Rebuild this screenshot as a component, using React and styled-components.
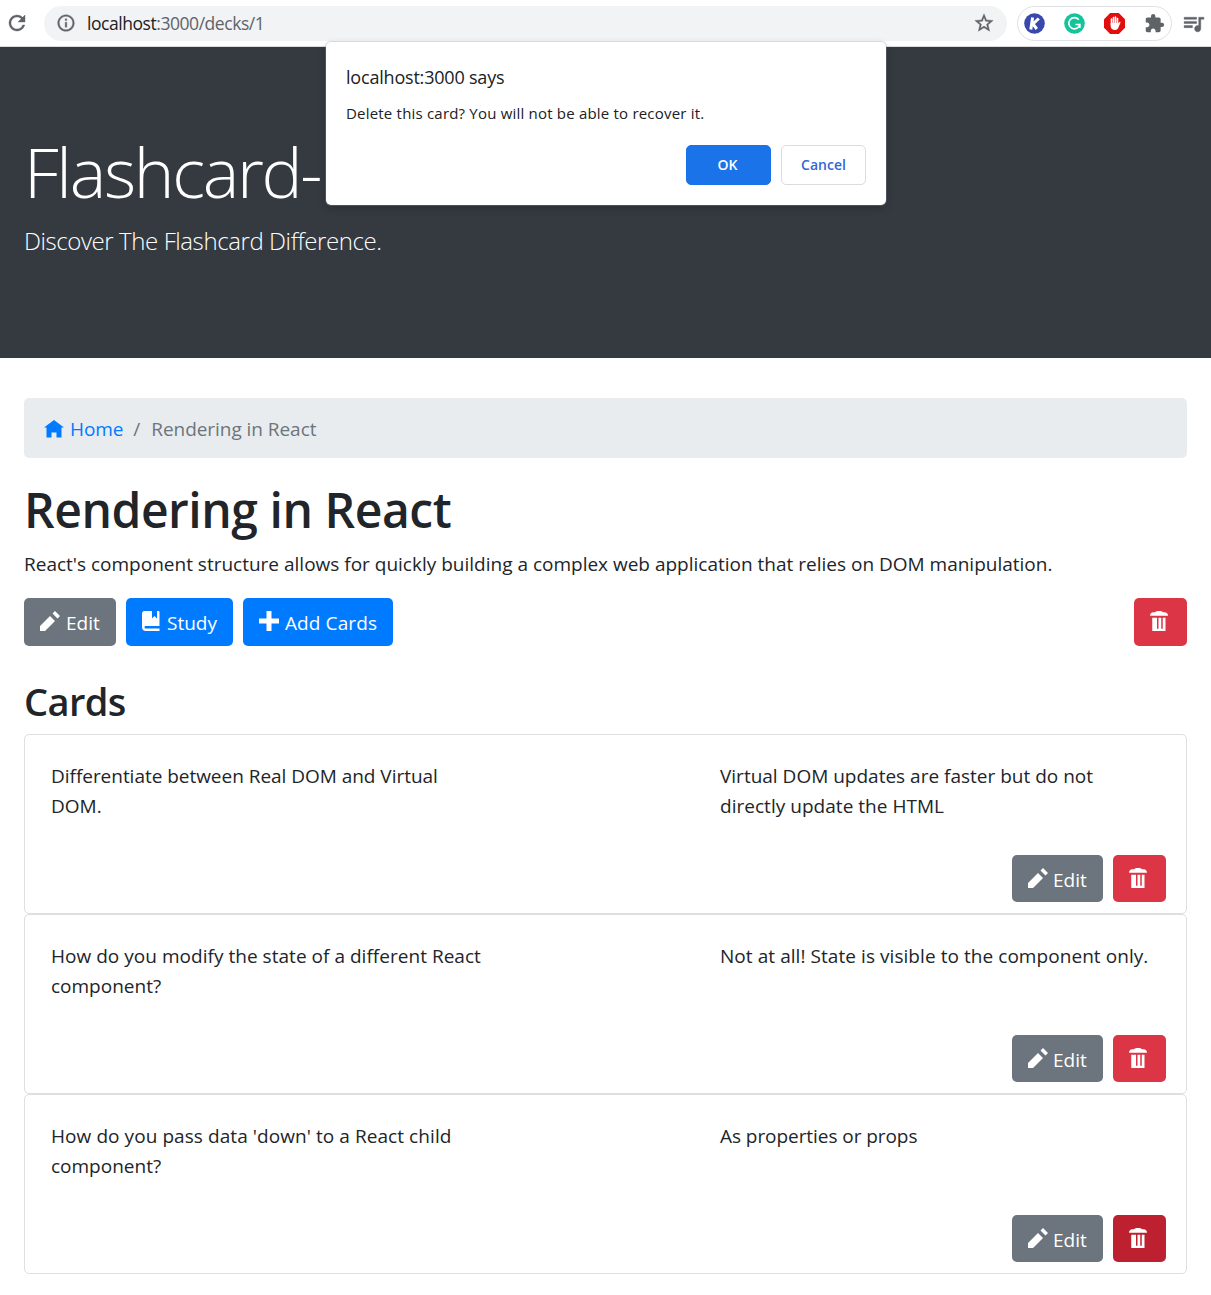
import React from "react";
import styled, { createGlobalStyle } from "styled-components";
import { MdRefresh, MdStarBorder, MdInfoOutline, MdExtension, MdQueueMusic } from "react-icons/md";

const GlobalStyle = createGlobalStyle`
  *, *::before, *::after { box-sizing: border-box; }
  body {
    margin: 0;
    background: #fff;
    color: #212529;
    font-family: "Open Sans", "Noto Sans", sans-serif;
    font-size: 19px;
    line-height: 30px;
  }
  h1, h2, p { margin: 0; }
  button { font-family: inherit; }
  svg { display: block; flex: none; }
`;

const Text = styled.span`
  letter-spacing: ${(p) => p.$track || 0}px;
  white-space: nowrap;
`;

const Toolbar = styled.header`
  display: flex;
  align-items: center;
  height: 47px;
  padding: 0 5px;
  background: #fff;
  border-bottom: 1px solid #d9dbdd;
  color: #5f6368;
`;

const ToolIcon = styled.span`
  display: flex;
  path { stroke-width: 0.4px; }
  path[fill="none"] { stroke: none; }
`;

const AddressBar = styled.div`
  display: flex;
  align-items: center;
  flex: 1;
  height: 35px;
  margin: 0 10px 0 15px;
  padding: 0 12px;
  border-radius: 18px;
  background: #f1f3f4;
`;

const Url = styled.div`
  flex: 1;
  margin-left: 11px;
  font-size: 17.5px;
  b { font-weight: 400; color: #202124; }
`;

const Extensions = styled.div`
  display: flex;
  align-items: center;
  gap: 19px;
  width: 155px;
  height: 35px;
  margin-right: 9px;
  padding: 0 6px;
  border: 1px solid #dfe1e5;
  border-radius: 18px;
`;

const Banner = styled.section`
  height: 311px;
  padding: 79px 24px 0;
  background: #343a40;
  color: #fff;
  font-weight: 300;
`;

const BannerTitle = styled.h1`
  font-size: 69px;
  font-weight: 300;
  line-height: 90px;
`;

const Tagline = styled.p`
  margin-top: 6px;
  font-size: 24px;
  line-height: 38px;
`;

const Main = styled.main`
  padding: 40px 24px 0;
`;

const Breadcrumb = styled.nav`
  display: flex;
  align-items: center;
  height: 60px;
  padding: 2px 20px 0;
  border-radius: 5px;
  background: #e9ecef;
  color: #6c757d;
`;

const HomeLink = styled.a`
  display: flex;
  align-items: center;
  gap: 6px;
  color: #007bff;
  svg { margin-top: 1px; }
`;

const Slash = styled.span`
  padding: 0 11px 0 10px;
`;

const DeckTitle = styled.h1`
  margin-top: 21px;
  font-size: 48px;
  font-weight: 600;
  line-height: 62px;
`;

const Description = styled.p`
  margin-top: 8px;
`;

const Actions = styled.div`
  display: flex;
  gap: 10px;
  margin-top: 19px;
`;

const fills = { gray: "#6c757d", blue: "#007bff", red: "#dc3545", darkRed: "#bd2130" };

const Button = styled.button`
  display: flex;
  align-items: center;
  gap: ${(p) => p.$gap || 6}px;
  width: ${(p) => p.$width}px;
  height: ${(p) => p.$height || 48}px;
  margin-left: ${(p) => (p.$end ? "auto" : 0)};
  padding: 0 0 0 16px;
  border: 0;
  border-radius: 5px;
  background: ${(p) => fills[p.$fill]};
  color: #fff;
  font-size: 19px;
  svg { margin-bottom: 2px; }
  span { padding-top: 2px; }
`;

const CardsTitle = styled.h2`
  margin-top: 31px;
  font-size: 38px;
  font-weight: 600;
  line-height: 48px;
`;

const CardList = styled.div`
  margin-top: 9px;
`;

const Card = styled.article`
  display: flex;
  flex-direction: column;
  justify-content: space-between;
  height: 180px;
  padding: 26px 20px 11px 26px;
  border: 1px solid #dfdfdf;
  border-radius: 5px;
`;

const Sides = styled.div`
  display: grid;
  grid-template-columns: 669px 1fr;
`;

const CardActions = styled.div`
  display: flex;
  justify-content: flex-end;
  gap: 10px;
`;

const Dialog = styled.div`
  position: absolute;
  top: 42px;
  left: 326px;
  width: 560px;
  height: 163px;
  padding: 20px;
  border-radius: 5px;
  background: #fff;
  box-shadow: 0 0 0 1px rgba(150, 155, 160, 0.3), 0 3px 8px rgba(0, 0, 0, 0.2);
  color: #202124;
`;

const DialogTitle = styled.div`
  font-size: 18px;
  line-height: 30px;
`;

const DialogMessage = styled.div`
  margin-top: 9px;
  font-size: 15px;
  line-height: 24px;
`;

const DialogActions = styled.div`
  display: flex;
  justify-content: flex-end;
  gap: 10px;
  margin-top: 20px;
`;

const DialogButton = styled.button`
  width: 85px;
  height: 40px;
  padding: 0 ${(p) => (p.$primary ? 2 : 0)}px 2px 0;
  border: 1px solid ${(p) => (p.$primary ? "#1a73e8" : "#dadce0")};
  border-radius: 5px;
  background: ${(p) => (p.$primary ? "#1a73e8" : "#fff")};
  color: ${(p) => (p.$primary ? "#fff" : "#3367d6")};
  font-size: 14px;
  font-weight: 600;
`;

const shapes = {
  home: "M4 0l-4 3h1v4h2v-2h2v2h2v-4.03l1 .03-4-3z",
  pencil: "M6 0l-1 1 2 2 1-1-2-2zm-2 2l-4 4v2h2l4-4-2-2z",
  plus: "M3 0v3h-3v2h3v3h2v-3h3v-2h-3v-3h-2z",
  book: "M1 0c-.07 0-.13.01-.19.03-.39.08-.7.39-.78.78-.03.06-.03.12-.03.19v5.5c0 .83.67 1.5 1.5 1.5h5.5v-1h-5.5c-.28 0-.5-.22-.5-.5s.22-.5.5-.5h5.5v-5.5c0-.28-.22-.5-.5-.5h-.5v3l-1-1-1 1v-3h-3z",
  trash: "M3 0c-.5 0-.7.3-1 .5h-.7c-.7 0-1.3.6-1.3 1.4h7.2c0-.8-.6-1.4-1.3-1.4h-.7c-.3-.2-.5-.5-1-.5h-1.2zm-2.1 2.7v5.300h5.300v-5.300h-1.100v4.400h-.6v-4.400h-1.100v4.400h-.6v-4.400h-1.900z",
};

const Icon = ({ name }) => (
  <svg width="20" height="20" viewBox="0 0 8 8" fill="currentColor">
    <path d={shapes[name]} />
  </svg>
);

const cards = [
  {
    front: [["Differentiate between Real DOM and Virtual", -0.03], ["DOM."]],
    back: [["Virtual DOM updates are faster but do not"], ["directly update the HTML", 0.03]],
  },
  {
    front: [["How do you modify the state of a different React", 0.03], ["component?"]],
    back: [["Not at all! State is visible to the component only.", 0.06]],
  },
  {
    front: [["How do you pass data 'down' to a React child", 0.07], ["component?"]],
    back: [["As properties or props", -0.06]],
    active: true,
  },
];

const Lines = ({ lines }) => (
  <div>
    {lines.map(([line, track]) => (
      <div key={line}><Text $track={track}>{line}</Text></div>
    ))}
  </div>
);

export default function App() {
  return (
    <>
      <GlobalStyle />
      <Toolbar>
        <ToolIcon><MdRefresh size={24} /></ToolIcon>
        <AddressBar>
          <ToolIcon><MdInfoOutline size={20} /></ToolIcon>
          <Url><Text $track={-0.45}><b>localhost</b>:3000/decks/1</Text></Url>
          <ToolIcon><MdStarBorder size={22} /></ToolIcon>
        </AddressBar>
        <Extensions>
          <svg width="21" height="21" viewBox="0 0 21 21">
            <circle cx="10.5" cy="10.5" r="10.3" fill="#3949ab" />
            <path d="M8.6 4.5 6.8 16.5M14.8 5.5 9 11l3.8 5" fill="none" stroke="#fff" strokeWidth="3" />
          </svg>
          <svg width="21" height="21" viewBox="0 0 21 21">
            <circle cx="10.5" cy="10.5" r="10.3" fill="#15c39a" />
            <path d="M14.8 6.7A5.6 5.6 0 1 0 15.9 11.5H11.5M15.9 11.5V15" fill="none" stroke="#fff" strokeWidth="1.6" />
          </svg>
          <svg width="21" height="21" viewBox="0 0 21 21">
            <path d="M6.2 0h8.6L21 6.2v8.6L14.8 21H6.2L0 14.8V6.2z" fill="#e40d0d" />
            <path d="M7.5 6v6M9.5 4.5V11M11.5 4V11M13.5 5.5V12" stroke="#fff" strokeWidth="1.6" strokeLinecap="round" />
            <path d="M6.7 10h7.6l1.4-1.2q1.2-.2.7.9L14 15.5Q12.6 17.2 10 17T6.7 14z" fill="#fff" />
          </svg>
          <MdExtension size={21} />
        </Extensions>
        <ToolIcon><MdQueueMusic size={25} /></ToolIcon>
      </Toolbar>
      <Banner>
        <BannerTitle><Text $track={-2.3}>Flashcard-</Text></BannerTitle>
        <Tagline><Text $track={-0.41}>Discover The Flashcard Difference.</Text></Tagline>
      </Banner>
      <Main>
        <Breadcrumb>
          <HomeLink><Icon name="home" /><Text $track={-0.1}>Home</Text></HomeLink>
          <Slash>/</Slash>
          <Text $track={-0.05}>Rendering in React</Text>
        </Breadcrumb>
        <DeckTitle><Text $track={-0.45}>Rendering in React</Text></DeckTitle>
        <Description>
          <Text>React's component structure allows for quickly building a complex web application that relies on DOM manipulation.</Text>
        </Description>
        <Actions>
          <Button $fill="gray" $width={92}><Icon name="pencil" /><Text>Edit</Text></Button>
          <Button $fill="blue" $width={107} $gap={5}><Icon name="book" /><Text>Study</Text></Button>
          <Button $fill="blue" $width={150}><Icon name="plus" /><Text $track={0.1}>Add Cards</Text></Button>
          <Button $fill="red" $width={53} $end><Icon name="trash" /></Button>
        </Actions>
        <CardsTitle><Text $track={-0.6}>Cards</Text></CardsTitle>
        <CardList>
          {cards.map((card) => (
            <Card key={card.front[0][0]}>
              <Sides><Lines lines={card.front} /><Lines lines={card.back} /></Sides>
              <CardActions>
                <Button $fill="gray" $width={91} $height={47} $gap={5}><Icon name="pencil" /><Text>Edit</Text></Button>
                <Button $fill={card.active ? "darkRed" : "red"} $width={53} $height={47}><Icon name="trash" /></Button>
              </CardActions>
            </Card>
          ))}
        </CardList>
      </Main>
      <Dialog role="dialog">
        <DialogTitle><Text $track={-0.2}>localhost:3000 says</Text></DialogTitle>
        <DialogMessage><Text $track={0.2}>Delete this card? You will not be able to recover it.</Text></DialogMessage>
        <DialogActions>
          <DialogButton $primary><Text>OK</Text></DialogButton>
          <DialogButton><Text>Cancel</Text></DialogButton>
        </DialogActions>
      </Dialog>
    </>
  );
}
